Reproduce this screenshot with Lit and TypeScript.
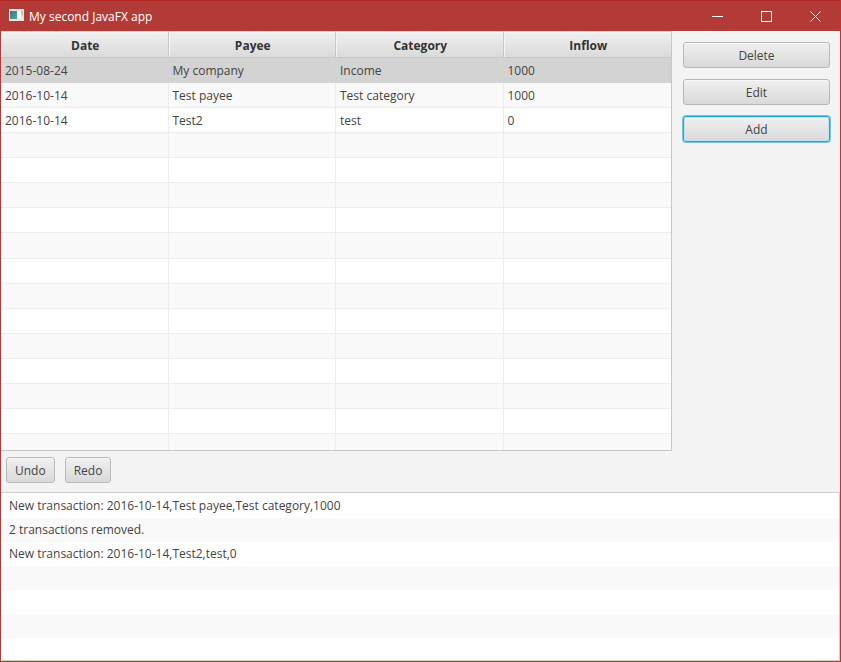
import { LitElement, html, css } from "lit";
import { customElement, state } from "lit/decorators.js";

interface Transaction {
  date: string;
  payee: string;
  category: string;
  inflow: string;
}

const VISIBLE_ROWS = 16;
const VISIBLE_LOG_ROWS = 7;

@customElement("app-root")
export class AppRoot extends LitElement {
  @state() private transactions: Transaction[] = [
    { date: "2015-08-24", payee: "My company", category: "Income", inflow: "1000" },
    { date: "2016-10-14", payee: "Test payee", category: "Test category", inflow: "1000" },
    { date: "2016-10-14", payee: "Test2", category: "test", inflow: "0" },
  ];

  @state() private log: string[] = [
    "New transaction: 2016-10-14,Test payee,Test category,1000",
    "2 transactions removed.",
    "New transaction: 2016-10-14,Test2,test,0",
  ];

  @state() private selected = 0;

  static styles = css`
    :host {
      display: flex;
      flex-direction: column;
      box-sizing: border-box;
      height: 100vh;
      border: 1px solid #b93632;
      border-top: 0;
      background: #f3f3f3;
      color: #444;
      font: 12px/18px "Open Sans", "Noto Sans", sans-serif;
      overflow: hidden;
    }
    * {
      box-sizing: border-box;
    }
    .titlebar {
      display: flex;
      align-items: center;
      flex: none;
      height: 31px;
      padding-left: 8px;
      border-top: 1px solid #b42623;
      background: #b33b37;
      color: #fff;
    }
    .title {
      flex: 1;
      margin: 0 0 0 4px;
      padding-top: 1px;
      font-size: 12px;
      font-weight: 400;
    }
    .control {
      display: flex;
      align-items: center;
      justify-content: center;
      width: 49px;
      height: 30px;
      padding: 0;
      border: 0;
      background: none;
      color: #fff;
    }
    .app-icon,
    .control svg {
      display: block;
    }
    .main {
      display: flex;
      flex: 1;
      min-height: 0;
    }
    .table-box {
      flex: 1;
      min-width: 0;
      border-right: 1px solid #c8c8c8;
      border-bottom: 1px solid #c8c8c8;
    }
    .table {
      width: 100%;
      height: 100%;
      table-layout: fixed;
      border-collapse: separate;
      border-spacing: 0;
      background: #fff;
    }
    .table th {
      height: 27px;
      padding: 3px 0 0 2px;
      border-top: 1px solid #d0d0d0;
      border-right: 1px solid #c8c8c8;
      border-bottom: 1px solid #c8c8c8;
      background: linear-gradient(#f0f0f0, #dadada);
      box-shadow: inset 1px 1px #f4f4f4;
      color: #333;
      font-size: 12px;
      font-weight: 700;
      line-height: 18px;
    }
    .table td {
      height: 25px;
      padding: 1px 0 0 4px;
      border-right: 1px solid #ededed;
      border-bottom: 1px solid #ededed;
      line-height: 18px;
      white-space: nowrap;
    }
    .table tr :last-child {
      border-right-width: 0;
    }
    .table tbody tr:nth-child(even) {
      background: #f9f9f9;
    }
    .table tbody tr.selected {
      background: #d3d3d3;
    }
    .table .selected td {
      border-color: #d3d3d3;
    }
    .table .cut td {
      height: 16px;
      border-bottom: 0;
    }
    .side {
      display: flex;
      flex-direction: column;
      flex: none;
      gap: 11px;
      width: 168px;
      padding: 11px 10px 0 11px;
    }
    .button {
      height: 26px;
      padding: 1px 8px 0;
      border: 1px solid #b8b8b8;
      border-radius: 3px;
      background: linear-gradient(#f0f0f0, #d9d9d9);
      box-shadow: inset 0 1px #f8f8f8;
      color: #444;
      font: inherit;
    }
    .button.default {
      border-color: #1da4d8;
      box-shadow: 0 0 0 1px #74c4e2, inset 0 0 0 1px #c5e3ee;
    }
    .button:focus-visible {
      outline: 1px solid #1da4d8;
    }
    .toolbar {
      display: flex;
      flex: none;
      gap: 10px;
      padding: 6px 5px 9px;
    }
    .log {
      flex: none;
      margin: 0;
      padding: 1px 0 0;
      border: 1px solid #cdcdcd;
      border-left: 0;
      background: #fff;
      list-style: none;
    }
    .entry {
      height: 24px;
      padding: 0 8px;
      line-height: 24px;
      white-space: nowrap;
    }
    .entry:nth-child(even) {
      background: #f9f9f9;
    }
    .entry:last-child {
      height: 22px;
    }
  `;

  private row(index: number) {
    const t = this.transactions[index];
    const name = index === VISIBLE_ROWS - 1 ? "cut" : t && index === this.selected ? "selected" : "";
    return html`<tr class=${name} @click=${() => t && (this.selected = index)}>
      <td>${t?.date}</td>
      <td>${t?.payee}</td>
      <td>${t?.category}</td>
      <td>${t?.inflow}</td>
    </tr>`;
  }

  render() {
    return html`
      <header class="titlebar">
        <svg class="app-icon" width="16" height="14" viewBox="0 0 16 14" aria-hidden="true">
          <defs>
            <linearGradient id="screen" x1="0" y1="0" x2="1" y2="1">
              <stop offset="0" stop-color="#3c6f9c" />
              <stop offset="1" stop-color="#52b184" />
            </linearGradient>
          </defs>
          <rect width="15" height="12" fill="#e9e4e2" />
          <rect x="1" y="2" width="7" height="8" fill="url(#screen)" />
          <rect x="9" y="2" width="3" height="8" fill="#f8faf9" />
          <path d="M12 2h2v5l-2-2z" fill="#a5c9b9" />
        </svg>
        <h1 class="title">My second JavaFX app</h1>
        <button class="control" aria-label="Minimize">
          <svg width="11" height="12"><path d="M0 6.5h11" stroke="currentColor" /></svg>
        </button>
        <button class="control" aria-label="Maximize">
          <svg width="11" height="12">
            <rect x="0.5" y="1.5" width="10" height="10" fill="none" stroke="currentColor" />
          </svg>
        </button>
        <button class="control" aria-label="Close">
          <svg width="11" height="12">
            <path d="M.5 1.5l10 10M10.5 1.5l-10 10" fill="none" stroke="currentColor" />
          </svg>
        </button>
      </header>
      <main class="main">
        <div class="table-box">
          <table class="table">
            <thead>
              <tr>
                <th scope="col">Date</th>
                <th scope="col">Payee</th>
                <th scope="col">Category</th>
                <th scope="col">Inflow</th>
              </tr>
            </thead>
            <tbody>
              ${Array.from({ length: VISIBLE_ROWS }, (_, i) => this.row(i))}
            </tbody>
          </table>
        </div>
        <div class="side">
          <button class="button">Delete</button>
          <button class="button">Edit</button>
          <button class="button default">Add</button>
        </div>
      </main>
      <div class="toolbar">
        <button class="button">Undo</button>
        <button class="button">Redo</button>
      </div>
      <ul class="log">
        ${Array.from({ length: VISIBLE_LOG_ROWS }, (_, i) => html`<li class="entry">${this.log[i]}</li>`)}
      </ul>
    `;
  }
}
